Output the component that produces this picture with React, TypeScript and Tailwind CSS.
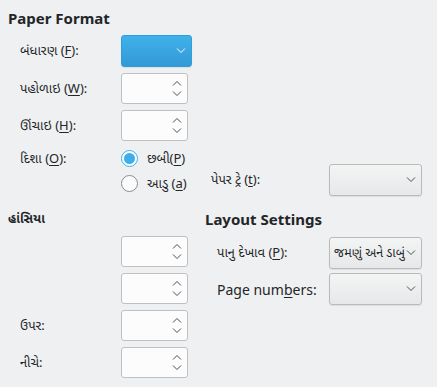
import React from 'react';

const font = "font-['Noto_Sans','Noto_Sans_Gujarati','Lohit_Gujarati',sans-serif]";

const Mn = ({ c }: { c: string }) => <span className="underline underline-offset-2">{c}</span>;

const Chevron = ({ up = false, white = false }: { up?: boolean; white?: boolean }) => (
  <svg width="10" height="6" viewBox="0 0 10 6" className="block shrink-0">
    <path
      d={up ? 'M1 5.5 L5 1.5 L9 5.5' : 'M1 0.5 L5 4.5 L9 0.5'}
      fill="none"
      stroke={white ? '#ffffff' : '#4d4f51'}
      strokeWidth="1"
    />
  </svg>
);

const SpinBox = () => (
  <div className="w-[67px] h-[31px] rounded-[3px] border border-[#bfc0c1] bg-[#fcfcfc] flex justify-end items-center pr-[5px]">
    <div className="flex flex-col gap-[5px]">
      <Chevron up />
      <Chevron />
    </div>
  </div>
);

const Combo = ({ active = false, text, w = 'w-[93px]' }: { active?: boolean; text?: string; w?: string }) => (
  <div
    className={`${w} h-[32px] rounded-[3px] border flex items-center pl-[4px] pr-[5px] shadow-[0_1px_1px_rgba(0,0,0,0.08)] ${
      active
        ? 'border-[#2f9fd8] bg-gradient-to-b from-[#40b1ea] to-[#3299d6]'
        : 'border-[#b9babb] bg-gradient-to-b from-[#f3f4f4] to-[#e7e8e9]'
    }`}
  >
    <span className="flex-1 overflow-hidden whitespace-nowrap text-[12.5px] text-[#232629]">{text}</span>
    <Chevron white={active} />
  </div>
);

const Radio = ({ checked = false }: { checked?: boolean }) => (
  <div
    className={`w-[17px] h-[17px] rounded-full border flex items-center justify-center ${
      checked ? 'border-[#3daee9] bg-white' : 'border-[#8a8c8e] bg-[#fcfcfc]'
    }`}
  >
    {checked && <div className="w-[11px] h-[11px] rounded-full bg-[#3daee9]" />}
  </div>
);

export default function App() {
  return (
    <div className={`w-[437px] h-[387px] bg-[#eff0f1] text-[#232629] text-[13px] overflow-hidden ${font}`}>
      <div className="pt-[8px] pl-[8px] h-[28px] text-[15px] font-bold leading-[20px]">Paper Format</div>

      {/* format rows */}
      <div className="mt-[7px] flex items-center pl-[20px]">
        <span className="w-[101px]">બંધારણ (<Mn c="F" />):</span>
        <Combo active w="w-[71px]" />
      </div>
      <div className="mt-[6px] flex items-center pl-[20px]">
        <span className="w-[101px]">પહોળાઇ (<Mn c="W" />):</span>
        <SpinBox />
      </div>
      <div className="mt-[6px] flex items-center pl-[20px]">
        <span className="w-[101px]">ઊંચાઇ (<Mn c="H" />):</span>
        <SpinBox />
      </div>

      <div className="mt-[5px] flex items-end">
        <div className="w-[205px] pl-[20px]">
          <div className="h-[25px] flex items-center">
            <span className="w-[101px]">દિશા (<Mn c="O" />):</span>
            <Radio checked />
            <span className="ml-[9px]">છબી(<Mn c="P" />)</span>
          </div>
          <div className="h-[25px] flex items-center">
            <span className="w-[101px]" />
            <Radio />
            <span className="ml-[9px]">આડુ (<Mn c="a" />)</span>
          </div>
        </div>
        <div className="flex items-center pl-[6px]">
          <span className="w-[118px]">પેપર ટ્રે (<Mn c="t" />):</span>
          <Combo />
        </div>
      </div>

      <div className="mt-[13px] flex">
        <div className="w-[205px]">
          <div className="h-[20px] pl-[8px] flex items-center text-[12.5px] font-bold">હાંસિયા</div>
          <div className="mt-[7px] flex flex-col gap-[6px] pl-[20px]">
            <div className="flex items-center">
              <span className="w-[101px]" />
              <SpinBox />
            </div>
            <div className="flex items-center">
              <span className="w-[101px]" />
              <SpinBox />
            </div>
            <div className="flex items-center">
              <span className="w-[101px]">ઉપર:</span>
              <SpinBox />
            </div>
            <div className="flex items-center">
              <span className="w-[101px]">નીચે:</span>
              <SpinBox />
            </div>
          </div>
        </div>
        <div className="flex-1">
          <div className="h-[20px] text-[15px] font-bold leading-[20px]">Layout Settings</div>
          <div className="mt-[8px] flex flex-col gap-[4px] pl-[12px]">
            <div className="flex items-center">
              <span className="w-[112px]">પાનુ દેખાવ (<Mn c="P" />):</span>
              <Combo text="જમણું અને ડાબું" />
            </div>
            <div className="flex items-center">
              <span className="w-[112px] text-[14px]">
                Page num<Mn c="b" />ers:
              </span>
              <Combo />
            </div>
          </div>
        </div>
      </div>
    </div>
  );
}
